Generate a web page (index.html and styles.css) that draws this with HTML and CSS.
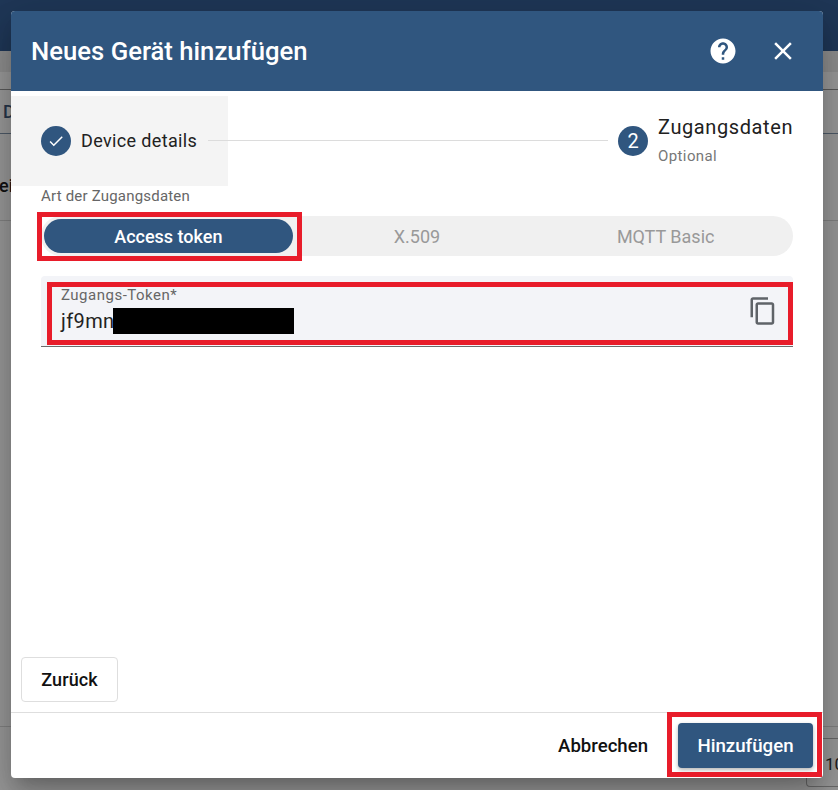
FILE: index.html
```html
<!DOCTYPE html>
<html lang="de">
<head>
<meta charset="utf-8">
<title>Neues Gerät hinzufügen</title>
<link rel="stylesheet" href="styles.css">
</head>
<body>
<div class="page">
  <div class="topbar"></div>
  <div class="band band-a"></div>
  <div class="band band-b"></div>
  <div class="tabs"><span class="tab-text">D</span></div>
  <div class="list-head"><span class="list-text">ei</span></div>
  <div class="list-body"></div>
  <div class="pager"><div class="pager-box">10</div></div>
</div>

<section class="dialog">
  <header class="dialog-head">
    <h1 class="dialog-title">Neues Gerät hinzufügen</h1>
    <div class="head-actions">
      <svg class="icon-help" viewBox="0 0 24 24" width="30" height="30"><path fill="#fff" d="M12 2C6.48 2 2 6.48 2 12s4.48 10 10 10 10-4.48 10-10S17.52 2 12 2zm1 17h-2v-2h2v2zm2.07-7.75l-.9.92C13.45 12.9 13 13.5 13 15h-2v-.5c0-1.1.45-2.1 1.17-2.83l1.24-1.26c.37-.36.59-.86.59-1.41 0-1.1-.9-2-2-2s-2 .9-2 2H8c0-2.21 1.79-4 4-4s4 1.79 4 4c0 .88-.36 1.68-.93 2.25z"/></svg>
      <svg class="icon-close" viewBox="0 0 24 24" width="30" height="30"><path fill="#fff" d="M19 6.41L17.59 5 12 10.59 6.41 5 5 6.41 10.59 12 5 17.59 6.41 19 12 13.41 17.59 19 19 17.59 13.41 12z"/></svg>
    </div>
  </header>

  <div class="dialog-body">
    <div class="stepper">
      <div class="step step-done">
        <span class="step-dot">
          <svg viewBox="0 0 24 24" width="18" height="18"><path fill="#fff" d="M9 16.17L4.83 12l-1.42 1.41L9 19 21 7l-1.41-1.41z"/></svg>
        </span>
        <span class="step-name">Device details</span>
      </div>
      <div class="step-line"></div>
      <div class="step step-next">
        <span class="step-dot">2</span>
        <span class="step-labels">
          <span class="step-title">Zugangsdaten</span>
          <span class="step-optional">Optional</span>
        </span>
      </div>
    </div>

    <div class="form">
      <div class="group-label">Art der Zugangsdaten</div>
      <div class="toggle">
        <div class="toggle-item toggle-active marked">Access token</div>
        <div class="toggle-item">X.509</div>
        <div class="toggle-item">MQTT Basic</div>
      </div>
      <div class="field">
        <div class="field-main">
          <div class="field-label">Zugangs-Token*</div>
          <div class="field-value">jf9mn<span class="redacted"></span></div>
        </div>
        <svg class="icon-copy" viewBox="0 0 24 24" width="30" height="30"><path fill="#5f6368" d="M16 1H4c-1.1 0-2 .9-2 2v14h2V3h12V1zm3 4H8c-1.1 0-2 .9-2 2v14c0 1.1.9 2 2 2h11c1.1 0 2-.9 2-2V7c0-1.1-.9-2-2-2zm0 16H8V7h11v14z"/></svg>
        <div class="field-mark"></div>
      </div>
    </div>

    <div class="back-row">
      <button class="btn-back">Zurück</button>
    </div>
  </div>

  <footer class="dialog-foot">
    <button class="btn-cancel">Abbrechen</button>
    <button class="btn-add marked-add">Hinzufügen</button>
  </footer>
</section>
</body>
</html>
```
FILE: styles.css
```css
* { box-sizing: border-box; }
html, body { margin: 0; height: 100%; overflow: hidden; }
body { font-family: Roboto, "Liberation Sans", sans-serif; background: #999; }

.page { display: flex; flex-direction: column; height: 790px; color: #222; }
.topbar { height: 51px; background: #1f3757; flex: none; }
.band { flex: none; }
.band-a { height: 21px; background: #8e8e8e; }
.band-b { height: 18px; background: #9a9a9a; border-bottom: 1px solid #5a5a5a; }
.tabs { height: 44px; flex: none; background: #9a9a9a; border-bottom: 1px solid #4e5a68; padding: 11px 3px; line-height: 22px; }
.tab-text { font-size: 18px; font-weight: 500; color: #27364a; }
.list-head { height: 87px; flex: none; background: #999; border-bottom: 1px solid #828282; padding: 41px 0 0 0; }
.list-text { display: block; font-size: 18px; line-height: 22px; font-weight: 500; color: #111; margin-left: -1px; }
.list-body { flex: 1; background: #999; border-bottom: 1px solid #828282; }
.pager { height: 63px; flex: none; background: #999; display: flex; justify-content: flex-end; padding: 11px 0 3px; }
.pager-box { width: 32px; height: 49px; border: 1px solid #6a6a6a; border-right: 0; border-radius: 4px 0 0 4px; padding: 15px 0 0 18px; font-size: 17px; color: #1c1c1c; white-space: nowrap; overflow: hidden; }

.dialog {
  position: absolute;
  left: 11px;
  top: 11px;
  width: 812px;
  height: 767px;
  display: flex;
  flex-direction: column;
  background: #fff;
  border-radius: 4px;
  box-shadow: 0 11px 15px -7px rgba(0,0,0,.2), 0 24px 38px 3px rgba(0,0,0,.14), 0 9px 46px 8px rgba(0,0,0,.12);
}
.dialog-head {
  height: 80px;
  flex: none;
  background: #30567f;
  border-radius: 4px 4px 0 0;
  display: flex;
  align-items: center;
  justify-content: space-between;
  padding: 0 25px 0 20px;
}
.dialog-title { margin: 0; font-size: 25.7px; font-weight: 500; color: #fff; line-height: 80px; letter-spacing: 0; }
.head-actions { display: flex; gap: 30px; align-items: center; }
.head-actions svg { display: block; }

.dialog-body { flex: 1; display: flex; flex-direction: column; min-height: 0; }

.stepper { display: flex; align-items: center; height: 90px; margin-top: 5px; flex: none; }
.step { display: flex; align-items: center; }
.step-done { width: 217px; height: 90px; padding-left: 30px; background: #f4f4f4; flex: none; }
.step-dot {
  width: 30px; height: 30px; border-radius: 50%; flex: none;
  background: #30567f; color: #fff; font-size: 20px;
  display: flex; align-items: center; justify-content: center;
}
.step-name { margin: -2px 0 0 10px; font-size: 18px; color: #212121; white-space: nowrap; letter-spacing: .36px; }
.step-line { height: 1px; background: #dcdcdc; width: 400px; margin-left: -20px; margin-top: -1px; flex: none; }
.step-next { margin-left: 10px; flex: none; }
.step-labels { display: flex; flex-direction: column; margin-left: 10px; margin-top: 0; }
.step-title { font-size: 20px; line-height: 24px; margin-top: -3px; color: #212121; letter-spacing: .6px; white-space: nowrap; }
.step-optional { font-size: 15px; line-height: 16px; margin-top: 9px; color: #777; letter-spacing: .4px; }

.form { padding: 0 30px; flex: none; }
.group-label { font-size: 15px; line-height: 16px; color: #666; margin-top: 2px; letter-spacing: .2px; }
.toggle {
  position: relative;
  display: grid;
  grid-template-columns: repeat(3, 1fr);
  gap: 0;
  height: 40px;
  margin-top: 12px;
  padding: 3px;
  background: #f0f0f0;
  border-radius: 20px;
}
.toggle-item {
  position: relative;
  display: flex; align-items: center; justify-content: center;
  font-size: 18px; color: #999; border-radius: 18px;
}
.toggle-active { background: #30567f; color: #fff; font-weight: 500; }
.marked::after {
  content: "";
  position: absolute;
  left: -7px; top: -7px; right: -9px; bottom: -8px;
  border: 5px solid #e81c2a;
  pointer-events: none;
}

.field {
  position: relative;
  display: flex;
  align-items: center;
  height: 71px;
  margin-top: 20px;
  padding: 0 15px 0 20px;
  background: #f3f4f8;
  border-radius: 4px 4px 0 0;
  border-bottom: 1px solid #6b6b6b;
}
.field-main { flex: 1; padding-bottom: 1px; }
.field-label { font-size: 15px; line-height: 16px; color: #666; letter-spacing: .5px; }
.field-value { display: flex; align-items: center; font-size: 20px; line-height: 26px; height: 26px; margin-top: 5px; color: #222; letter-spacing: .4px; }
.redacted { display: block; width: 181px; height: 26px; background: #000; flex: none; margin: 0 0 0 -2px; }
.icon-copy { display: block; flex: none; }
.field-mark {
  position: absolute;
  left: 6px; top: 6px; right: 0; bottom: 1px;
  border: 5px solid #e81c2a;
  pointer-events: none;
}

.back-row { margin-top: auto; padding: 0 0 10px 10px; }
.btn-back {
  width: 97px; height: 45px;
  background: #fff;
  border: 1px solid #dedede;
  border-radius: 4px;
  font: 500 18px Roboto, "Liberation Sans", sans-serif;
  letter-spacing: .1px;
  color: #111;
}

.dialog-foot {
  height: 66px; flex: none;
  border-top: 1px solid #dedede;
  display: flex; align-items: center; justify-content: flex-end;
  padding: 0 10px 0 0;
}
.btn-cancel {
  background: none; border: 0; padding: 0; margin-right: 30px;
  font: 500 18.6px Roboto, "Liberation Sans", sans-serif;
  color: #111;
}
.btn-add {
  position: relative;
  width: 135px; height: 45px;
  background: #30567f;
  border: 0; border-radius: 4px;
  color: #fff;
  font: 500 18.7px Roboto, "Liberation Sans", sans-serif;
  box-shadow: 0 2px 4px rgba(0,0,0,.3);
}
.marked-add::after {
  content: "";
  position: absolute;
  left: -11px; top: -11px; right: -9px; bottom: -9px;
  border: 5px solid #e81c2a;
  pointer-events: none;
}
```
